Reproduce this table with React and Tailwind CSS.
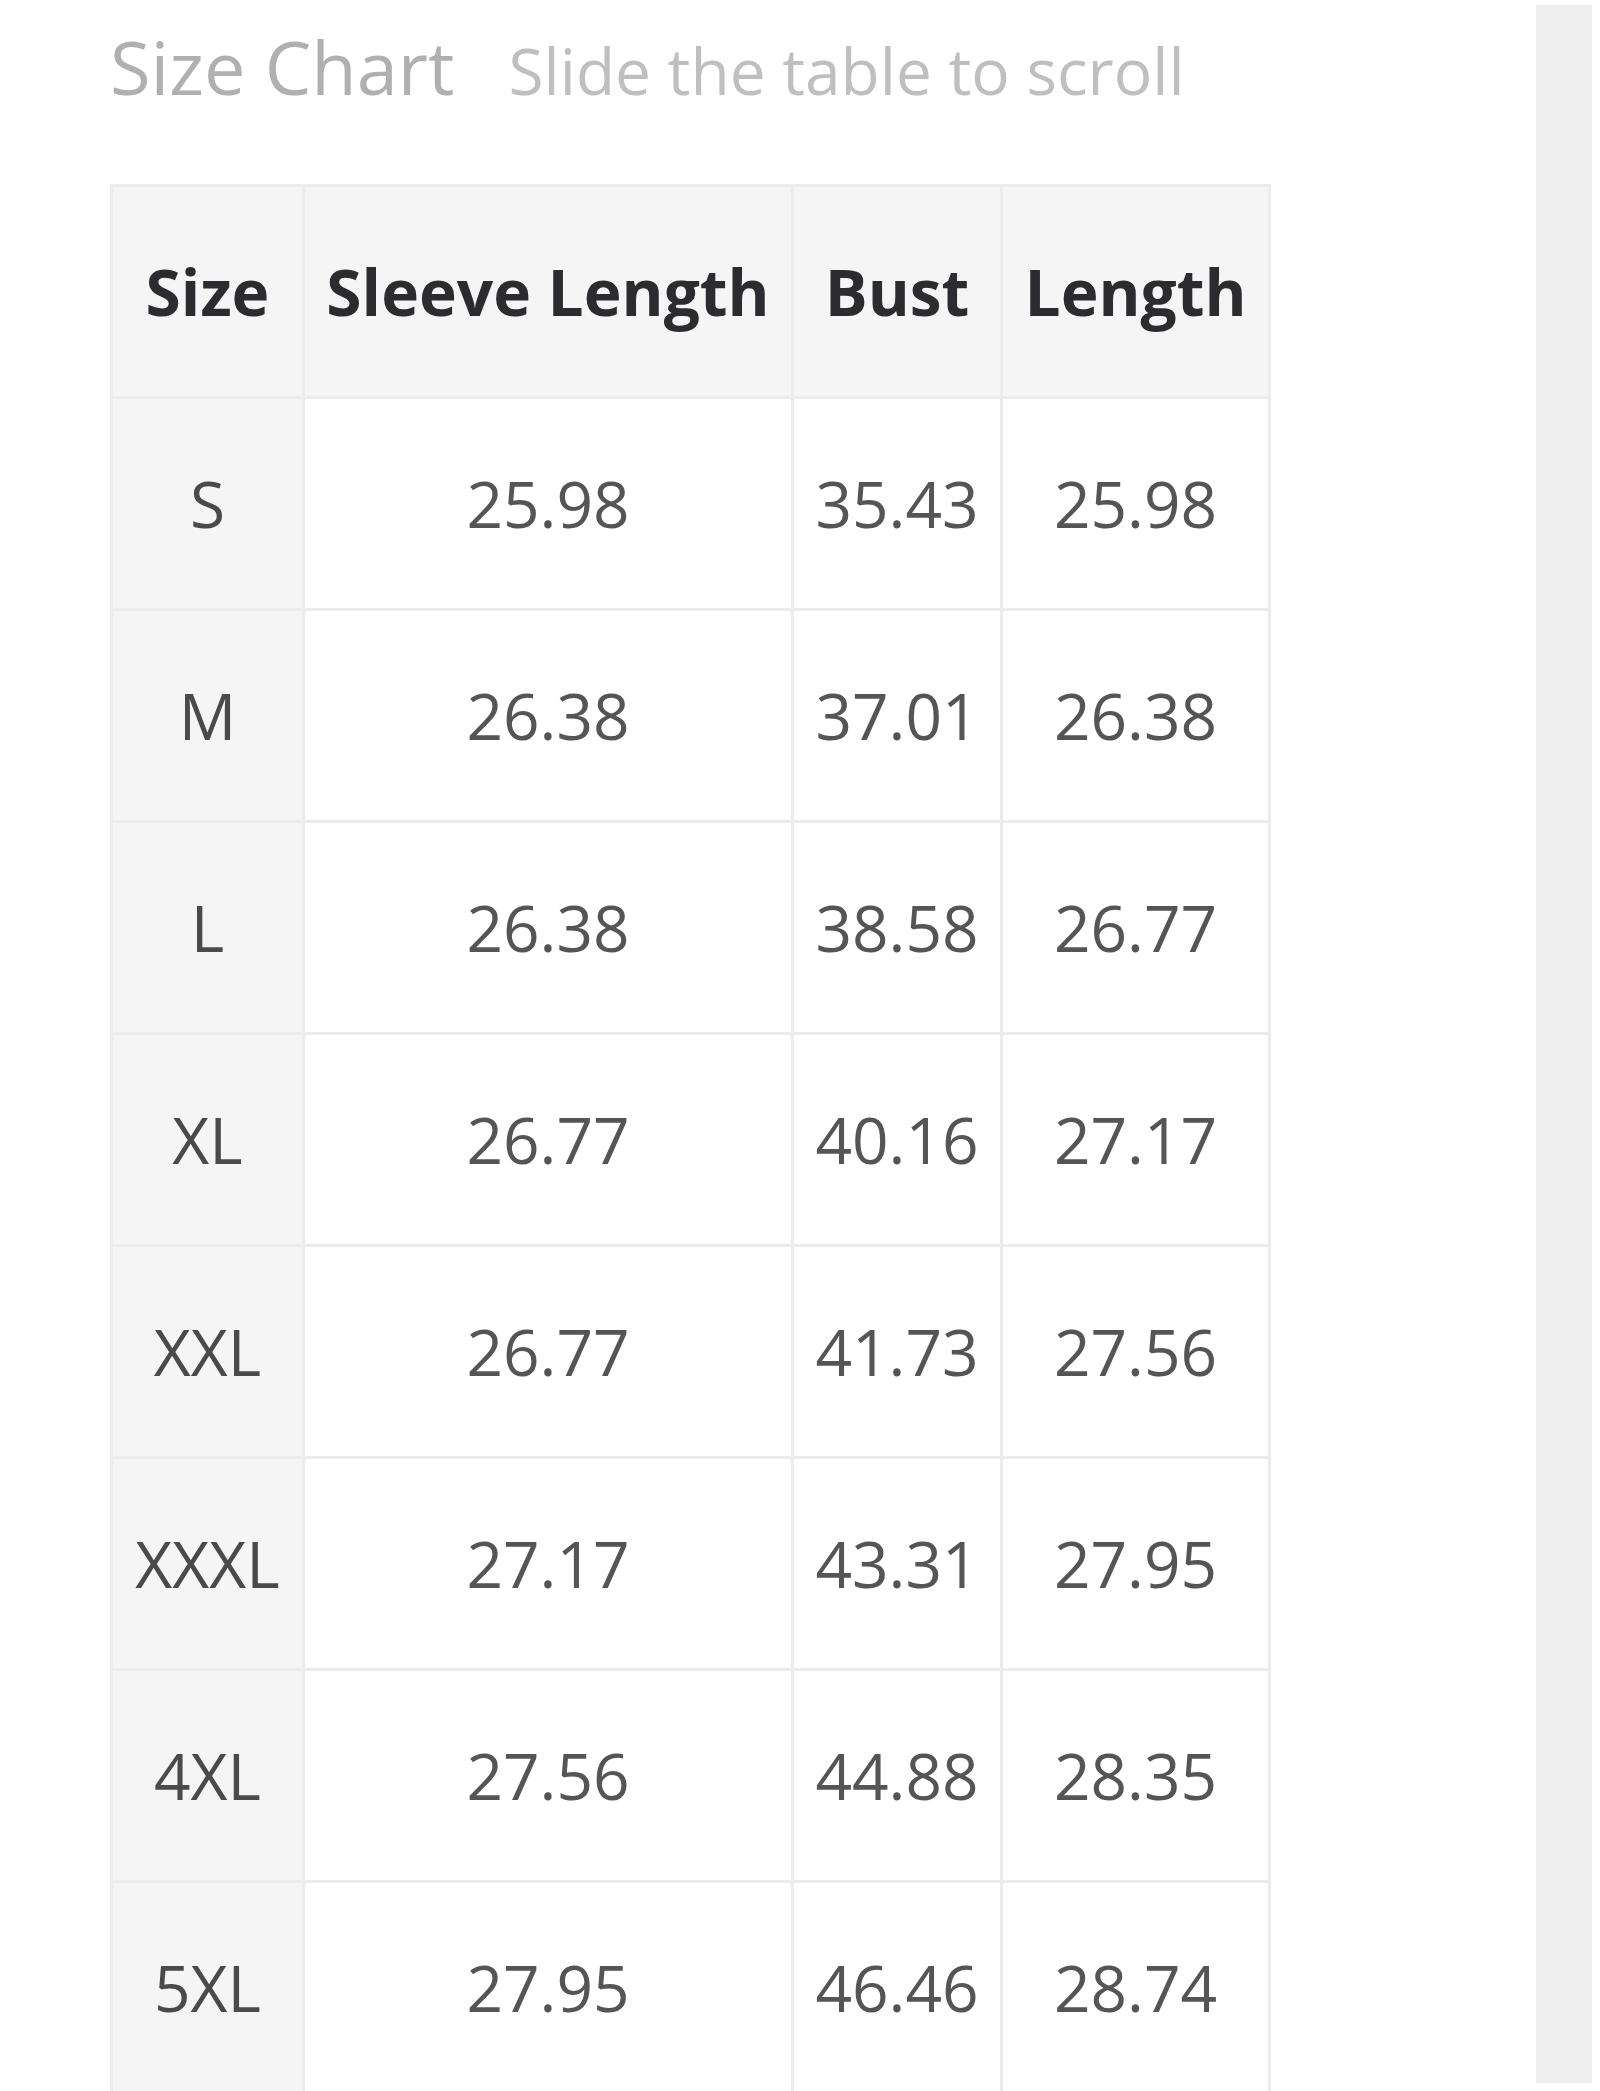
const rows = [
  ["S", "25.98", "35.43", "25.98"],
  ["M", "26.38", "37.01", "26.38"],
  ["L", "26.38", "38.58", "26.77"],
  ["XL", "26.77", "40.16", "27.17"],
  ["XXL", "26.77", "41.73", "27.56"],
  ["XXXL", "27.17", "43.31", "27.95"],
  ["4XL", "27.56", "44.88", "28.35"],
  ["5XL", "27.95", "46.46", "28.74"],
];

const headers = ["Size", "Sleeve Length", "Bust", "Length"];
const colWidths = ["w-[192px]", "w-[489px]", "w-[209px]", "w-[268px]"];

export default function App() {
  return (
    <div
      className="flex h-[2091px] w-[1600px] overflow-hidden bg-white"
      style={{ fontFamily: '"Open Sans", "Liberation Sans", sans-serif' }}
    >
      <main className="flex-1 pl-[110px] pt-[30px]">
        <div className="flex items-baseline">
          <h2 className="text-[74px] leading-[74px] font-normal text-[#b0b0b0]">
            Size Chart
          </h2>
          <span className="ml-[54px] text-[64px] leading-[74px] text-[#bfbfbf]">
            Slide the table to scroll
          </span>
        </div>

        <table className="mt-[76px] table-fixed border-collapse border-[3px] border-[#ececec]">
          <thead>
            <tr className="h-[212px] bg-[#f5f5f5]">
              {headers.map((h, i) => (
                <th
                  key={h}
                  className={`${colWidths[i]} border-[3px] border-[#ececec] px-4 text-center align-middle text-[64px] font-bold whitespace-nowrap text-[#2c2c30]`}
                >
                  {h}
                </th>
              ))}
            </tr>
          </thead>
          <tbody>
            {rows.map((r) => (
              <tr key={r[0]} className="h-[212px]">
                {r.map((cell, i) => (
                  <td
                    key={i}
                    className={
                      i === 0
                        ? "border-[3px] border-[#ececec] bg-[#f5f5f5] px-4 text-center align-middle text-[64px] whitespace-nowrap text-[#4a4a4a]"
                        : "border-[3px] border-[#ececec] bg-white px-4 text-center align-middle text-[64px] whitespace-nowrap text-[#555555]"
                    }
                  >
                    {cell}
                  </td>
                ))}
              </tr>
            ))}
          </tbody>
        </table>
      </main>

      {/* scroll track on the right */}
      <div className="mr-[8px] mt-[5px] h-[2078px] w-[56px] bg-[#efefef]" />
    </div>
  );
}
